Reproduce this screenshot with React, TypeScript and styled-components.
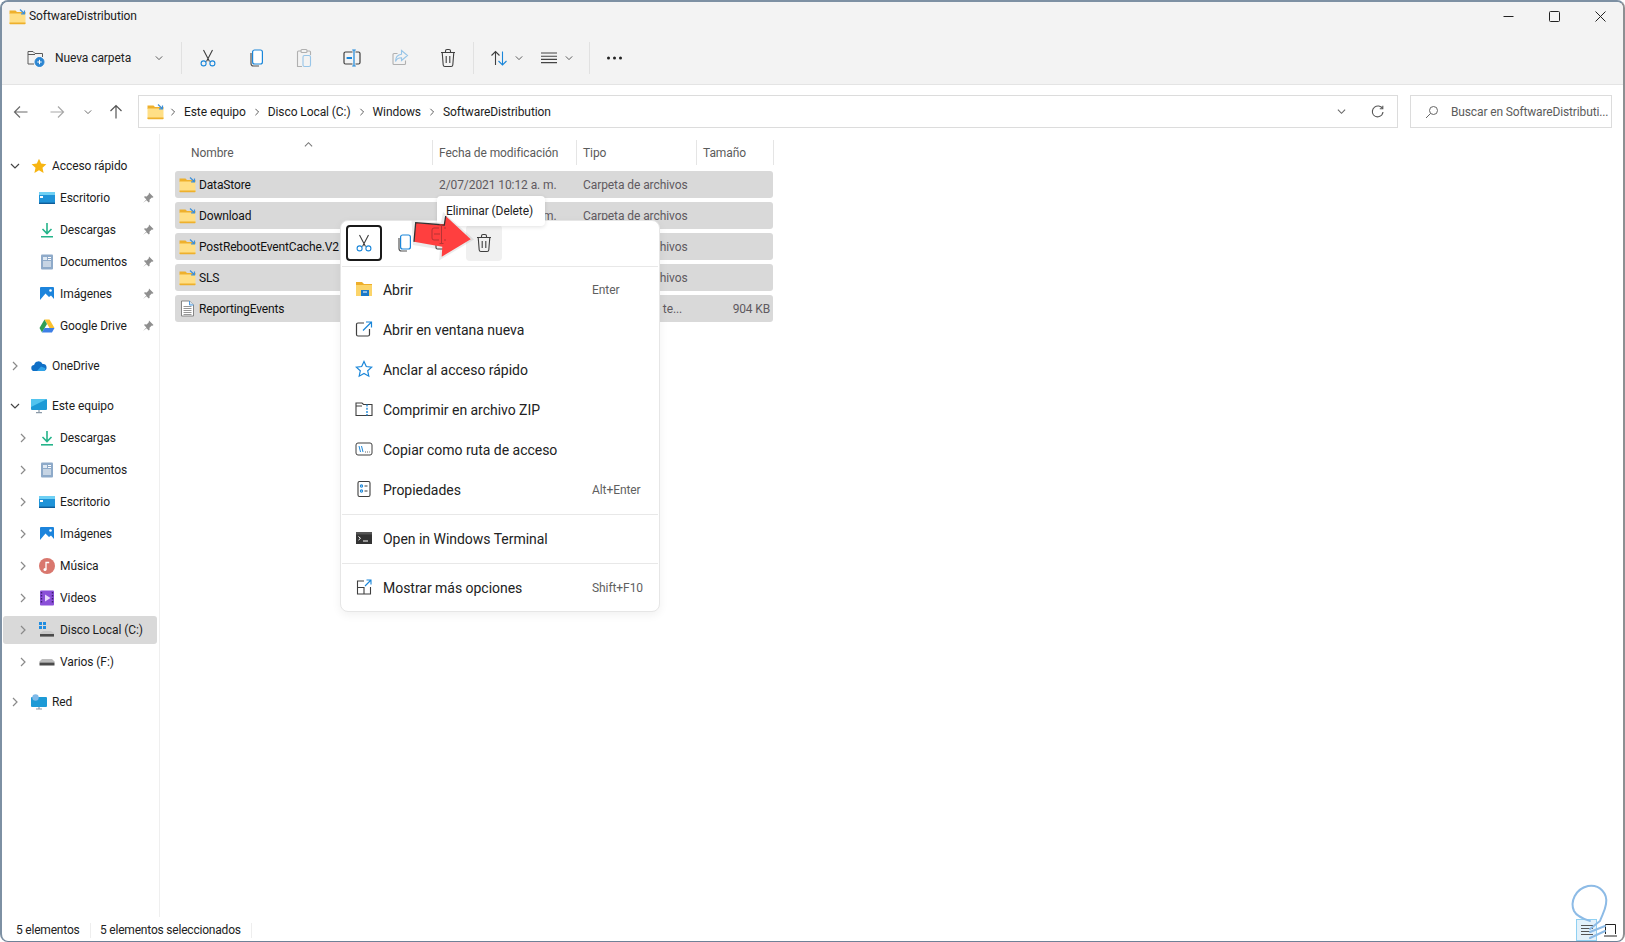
import React from "react";
import styled, { createGlobalStyle } from "styled-components";

const Global = createGlobalStyle`
  html, body { margin: 0; padding: 0; background: #fff; }
  body { font-family: Roboto, "Liberation Sans", sans-serif; font-size: 12px; color: #1b1b1b; letter-spacing: -0.08px; }
  #root { width: 1625px; height: 942px; overflow: hidden; }
  * { box-sizing: border-box; }
`;

const Win = styled.div`
  position: relative; width: 1625px; height: 942px; display: flex; flex-direction: column;
  background: #fff; overflow: hidden;
  border: 2px solid #7d90a3; border-bottom-width: 1px; border-right-color: #8d8f92; border-bottom-color: #6f8197;
  border-radius: 8px;
`;
const TitleBar = styled.div`
  height: 28px; background: #f3f3f3; display: flex; align-items: center; padding-left: 7px; font-size: 12px; flex: none;
`;
const TitleText = styled.span`flex: 1; color: #1c1c1c; margin-left: 3px;`;
const WinBtn = styled.div`width: 46px; height: 28px; display: flex; align-items: center; justify-content: center; flex: none;`;
const Toolbar = styled.div`
  height: 55px; padding-top: 1px; background: #f3f3f3; border-bottom: 1px solid #e4e4e4; display: flex; align-items: center; flex: none;
`;
const NewBtn = styled.div`
  width: 178px; display: flex; align-items: center; padding-left: 25px; gap: 10px; color: #222;
`;
const PushRight = styled.span`margin-left: auto; margin-right: 17px; display: flex;`;
const Sep = styled.div`width: 1px; height: 32px; background: #e1e1e1; margin: 0 2px 0 1px; flex: none;`;
const ToolSlot = styled.div<{ $w?: number; $pl?: number }>`
  width: ${(p) => p.$w ?? 48}px; display: flex; align-items: center; gap: 7px;
  justify-content: ${(p) => (p.$pl !== undefined ? "flex-start" : "center")};
  padding-left: ${(p) => p.$pl ?? 0}px; flex: none;
`;
const AddressRow = styled.div`
  height: 49px; display: flex; align-items: flex-start; padding: 10px 11px 0 1px; flex: none;
`;
const NavSlot = styled.div<{ $w: number }>`width: ${(p) => p.$w}px; height: 33px; display: flex; align-items: center; justify-content: center; flex: none;`;
const AddressBox = styled.div`
  flex: 1; height: 33px; margin-left: 7px; border: 1px solid #dcdcdc; display: flex; align-items: center; padding: 0 9px 0 8px; gap: 7px; color: #1c1c1c;
`;
const CrumbFolder = styled.span`display: flex; margin-right: -2px;`;
const CrumbText = styled.span`white-space: nowrap;`;
const AddressEnd = styled.div`margin-left: auto; display: flex; align-items: center; gap: 25px; padding-right: 3px;`;
const SearchBox = styled.div`
  width: 202px; height: 33px; margin-left: 12px; border: 1px solid #dcdcdc; display: flex; align-items: center; padding-left: 14px; gap: 12px; color: #5c5c5c; flex: none; white-space: nowrap; letter-spacing: -0.14px;
`;
const Main = styled.div`flex: 1; display: flex; min-height: 0;`;
const Sidebar = styled.nav`
  width: 158px; border-right: 1px solid #efefef; padding-top: 16px; flex: none; display: flex; flex-direction: column;
`;
const SideRow = styled.div<{ $level: number; $selected?: boolean; $gap?: boolean }>`
  height: 28px; margin: ${(p) => (p.$gap ? 10 : 2)}px 2px 2px 1px; padding: 0 3px 0 ${(p) => (p.$level ? 14 : 6)}px;
  display: flex; align-items: center; border-radius: 3px; color: #1c1c1c;
  background: ${(p) => (p.$selected ? "#d9d9d9" : "transparent")};
`;
const ChevSlot = styled.span`width: 12px; display: flex; justify-content: center; flex: none;`;
const SideIcon = styled.span`width: 16px; height: 16px; margin: 0 5px 0 10px; display: flex; flex: none;`;
const SideLabel = styled.span`white-space: nowrap; flex: 1;`;
const Content = styled.section`flex: 1; padding: 6px 0 0 15px;`;
const Columns = "258px 144px 120px 77px";
const HeaderRow = styled.div`
  position: relative; display: grid; grid-template-columns: ${Columns}; width: 600px; height: 25px; margin-bottom: 6px; color: #5b5b5b;
`;
const HeaderCell = styled.div<{ $first?: boolean }>`
  padding-left: ${(p) => (p.$first ? 16 : 6)}px; display: flex; align-items: center;
  border-right: 1px solid #e5e5e5;
`;
const SortMark = styled.span`position: absolute; left: 129px; top: 0; display: flex;`;
const FileRow = styled.div`
  display: grid; grid-template-columns: ${Columns}; width: 598px; height: 27px; margin-bottom: 4px; background: #d9d9d9; border-radius: 3px; align-items: center;
`;
const NameCell = styled.div`display: flex; align-items: center; padding-left: 4px; gap: 3px; color: #111; white-space: nowrap; letter-spacing: -0.14px;`;
const DimCell = styled.div`padding-left: 6px; color: #5f5a60; white-space: nowrap;`;
const SizeCell = styled.div`text-align: right; padding-right: 4px; color: #5f5a60; letter-spacing: -0.15px;`;
const StatusBar = styled.div`height: 24px; padding: 2px 0 0 14px; display: flex; align-items: center; flex: none; color: #222; position: relative; letter-spacing: -0.2px;`;
const StatusItem = styled.span<{ $w: number }>`width: ${(p) => p.$w}px; flex: none; height: 15px; line-height: 15px; border-right: 1px solid #eeeeee; white-space: nowrap;`;
const StatusNext = styled.span`padding-left: 9px;`;
const ViewToggles = styled.div`margin-left: auto; display: flex; align-items: center; height: 100%;`;
const DetailsToggle = styled.span`width: 21px; height: 22px; background: #e3f1fa; border: 1px solid #8fd0f2; display: flex; align-items: center; justify-content: center;`;
const TilesToggle = styled.span`width: 26px; display: flex; justify-content: center;`;

const Menu = styled.div`
  position: absolute; left: 338px; top: 218px; width: 320px; height: 392px; background: #fff; border: 1px solid #e6e6e6; border-radius: 8px;
  box-shadow: 0 3px 10px rgba(0,0,0,.06); padding-top: 4px; z-index: 3;
`;
const QuickBar = styled.div`display: flex; gap: 4px; padding: 0 5px; height: 36px;`;
const QuickBtn = styled.div<{ $focus?: boolean; $hover?: boolean }>`
  width: 36px; height: 36px; display: flex; align-items: center; justify-content: center; border-radius: 4px;
  border: ${(p) => (p.$focus ? "2px solid #1a1a1a" : "none")};
  background: ${(p) => (p.$hover ? "#f0f0f0" : "transparent")};
`;
const MenuSep = styled.div<{ $top: number; $bottom: number }>`
  height: 1px; background: #e8e8e8; margin: ${(p) => p.$top}px 1px ${(p) => p.$bottom}px;
`;
const MenuRow = styled.div`height: 40px; display: flex; align-items: center; padding-left: 14px; font-size: 14px; color: #222;`;
const MenuIcon = styled.span`width: 20px; height: 20px; display: flex; flex: none; margin-right: 8px;`;
const MenuLabel = styled.span`white-space: nowrap; letter-spacing: -0.03px;`;
const Shortcut = styled.span`position: absolute; left: 251px; font-size: 12px; color: #5f5f5f;`;
const Tip = styled.div`
  position: absolute; left: 435px; top: 194px; width: 108px; height: 30px; background: #fff; border-radius: 4px; padding-left: 9px;
  display: flex; align-items: center; box-shadow: 0 1px 4px rgba(0,0,0,.12); z-index: 4; color: #222;
`;
const ArrowArt = styled.svg`position: absolute; left: 401px; top: 204px; z-index: 5;`;
const Watermark = styled.svg`position: absolute; left: 1555px; top: 870px; z-index: 6; pointer-events: none;`;

const dark = "#3f3f3f";
const blue = "#1a86d9";

const Chevron = ({ dir = "right", c = "#8a8a8a", s = 10 }: { dir?: "right" | "down" | "up"; c?: string; s?: number }) => (
  <svg width={s} height={s} viewBox="0 0 10 10" fill="none" stroke={c} strokeWidth={1.2}>
    {dir === "right" && <path d="M3 1l4 4-4 4" />}
    {dir === "down" && <path d="M1 3l4 4 4-4" />}
    {dir === "up" && <path d="M1 7l4-4 4 4" />}
  </svg>
);
const Folder = ({ s = 17 }: { s?: number }) => (
  <svg width={s} height={s} viewBox="0 0 17 17">
    <path d="M0.5 2.5h6l1.5 1.5h8.5v2H.5z" fill="#eeb02c" />
    <path d="M.5 5.5h16v10a.6.6 0 01-.6.6H1.1a.6.6 0 01-.6-.6z" fill="#ffdf86" />
    <path d="M.5 14.6h16v1a.6.6 0 01-.6.6H1.1a.6.6 0 01-.6-.6z" fill="#eeb02c" />
    <path d="M11 1.5l4.5 4.2M15.5 2.5v3.4h-3.4" stroke="#3d8fd8" strokeWidth="1.2" fill="none" />
  </svg>
);
const TextFile = () => (
  <svg width="17" height="17" viewBox="0 0 17 17" fill="#fff" stroke="#7b7b7b" strokeWidth=".9">
    <path d="M2.5 1h8l4 4v11h-12z" />
    <path d="M4.5 6.5h8M4.5 8.5h8M4.5 10.5h8M4.5 12.5h8M4.5 14.5h8" strokeWidth=".8" />
    <path d="M10.5 1v4h4" stroke="#3d8fd8" fill="#d5e8f7" />
  </svg>
);
const NewFolderIcon = () => (
  <svg width="18" height="18" viewBox="0 0 18 18" fill="none" stroke="#5a5a5a" strokeWidth="1">
    <path d="M1 15V2.5h5l2 2h7.5V8M1 5.5h7M1 15h6" />
    <circle cx="12.5" cy="13" r="4.5" fill="#2b85d1" stroke="#2b85d1" />
    <path d="M12.5 10.8v4.4M10.3 13h4.4" stroke="#fff" />
  </svg>
);
const Cut = () => (
  <svg width="16" height="18" viewBox="0 0 16 18" fill="none" strokeWidth="1.1">
    <path d="M3.5 1l6 11.5M12.5 1l-6 11.5" stroke={dark} />
    <circle cx="3.6" cy="14.4" r="2.5" stroke={blue} />
    <circle cx="12.4" cy="14.4" r="2.5" stroke={blue} />
  </svg>
);
const Copy = () => (
  <svg width="18" height="20" viewBox="0 0 18 20" fill="none" strokeWidth="1.2">
    <path d="M4 5v10.5a2.5 2.5 0 002.5 2.5H12" stroke="#555" />
    <rect x="5.6" y="2" width="9.8" height="14" rx="2" stroke={blue} fill="#fff" />
  </svg>
);
const Paste = () => (
  <svg width="18" height="20" viewBox="0 0 18 20" fill="none" strokeWidth="1.1" opacity=".42">
    <path d="M6 3H3.5a1 1 0 00-1 1v14.5H7" stroke="#555" />
    <path d="M12 3h2.5a1 1 0 011 1v3" stroke="#555" />
    <rect x="6" y="1.5" width="6" height="3" rx="1" stroke="#555" />
    <rect x="8" y="7.5" width="7.5" height="11" rx="1.5" stroke={blue} />
  </svg>
);
const Rename = () => (
  <svg width="20" height="20" viewBox="0 0 20 20" fill="none" strokeWidth="1.2">
    <path d="M10.5 4H3.5a1.5 1.5 0 00-1.5 1.5v9A1.5 1.5 0 003.5 16h7M13.5 4H16.5A1.5 1.5 0 0118 5.5v9a1.5 1.5 0 01-1.5 1.5h-3" stroke={dark} />
    <path d="M12 2.5v15M10.2 2h3.6M10.2 18h3.6" stroke={blue} />
    <path d="M4.6 10H10" stroke={blue} strokeWidth="2" />
  </svg>
);
const Share = () => (
  <svg width="18" height="18" viewBox="0 0 18 18" fill="none" strokeWidth="1.1" opacity=".42">
    <path d="M14.5 11.5v3a1 1 0 01-1 1H3a1 1 0 01-1-1V5.5a1 1 0 011-1h3.5" stroke="#555" />
    <path d="M10.5 1.5L16.5 6.5l-6 5V8.8c-3 0-5 1-6 3.7 0-4 2-6.8 6-7.3z" stroke={blue} />
  </svg>
);
const Trash = () => (
  <svg width="18" height="20" viewBox="0 0 18 20" fill="none" stroke={dark} strokeWidth="1.1">
    <path d="M2 4.5h14M6.5 4.5V3a1.5 1.5 0 011.5-1.5h2A1.5 1.5 0 0111.5 3v1.5" />
    <path d="M3.2 4.5l1 12.5a1.7 1.7 0 001.7 1.5h6.2a1.7 1.7 0 001.7-1.5l1-12.5" />
    <path d="M7.2 8v7M10.8 8v7" />
  </svg>
);
const Sort = () => (
  <svg width="18" height="18" viewBox="0 0 18 18" fill="none" strokeWidth="1.1">
    <path d="M5.5 16V2.5M1.5 6.5l4-4 4 4" stroke={dark} />
    <path d="M12.5 2.5V16M8.5 12l4 4 4-4" stroke={blue} />
  </svg>
);
const ViewLines = () => (
  <svg width="18" height="14" viewBox="0 0 18 14" stroke="#444" strokeWidth="1.1">
    <path d="M1 2h16M1 5.2h16M1 8.4h16M1 11.6h16" />
  </svg>
);
const Dots = () => (
  <svg width="18" height="6" viewBox="0 0 18 6" fill="#222"><circle cx="1.5" cy="3" r="1.5" /><circle cx="7.5" cy="3" r="1.5" /><circle cx="13.5" cy="3" r="1.5" /></svg>
);
const Arrow = ({ dir, c }: { dir: "left" | "right" | "up"; c: string }) => (
  <svg width="16" height="16" viewBox="0 0 16 16" fill="none" stroke={c} strokeWidth="1.2">
    {dir === "left" && <path d="M14.5 8H1.5M7 2.5L1.5 8 7 13.5" />}
    {dir === "right" && <path d="M1.5 8h13M9 2.5L14.5 8 9 13.5" />}
    {dir === "up" && <path d="M8 14.5V1.5M2.5 7L8 1.5 13.5 7" />}
  </svg>
);
const Minimize = () => <svg width="11" height="11" viewBox="0 0 11 11" stroke="#222"><path d="M.5 5.5h10" /></svg>;
const Maximize = () => <svg width="11" height="11" viewBox="0 0 11 11" fill="none" stroke="#222"><rect x=".5" y=".5" width="10" height="10" rx="1" /></svg>;
const Close = () => <svg width="11" height="11" viewBox="0 0 11 11" stroke="#222"><path d="M.5.5l10 10M10.5.5l-10 10" /></svg>;
const Refresh = () => (
  <svg width="14" height="14" viewBox="0 0 14 14" fill="none" stroke="#555" strokeWidth="1.1">
    <path d="M11.5 3.2A5.5 5.5 0 102.5 10a5.5 5.5 0 009.5-3" /><path d="M11.8.8v3h-3" />
  </svg>
);
const SearchIcon = () => (
  <svg width="14" height="14" viewBox="0 0 14 14" fill="none" stroke="#666" strokeWidth="1">
    <circle cx="8.5" cy="5.5" r="4" /><path d="M5.5 8.5L1 13" />
  </svg>
);
const Pin = () => (
  <svg width="12" height="12" viewBox="0 0 12 12" fill="#8f8f8f"><path d="M7 .5l4.5 4.5-1 .7-.7-.2-2.3 2.3.1 1.9-.8.8-2.3-2.3L1 11l3.4-3.6L2 5.1l.8-.8 1.9.1L7 2.1l-.2-.7z" /></svg>
);
const Star = () => (
  <svg width="16" height="16" viewBox="0 0 16 16" fill="#f7b512"><path d="M8 .8l2.2 4.8 5.2.6-3.9 3.5 1.1 5.2L8 12.3l-4.6 2.6 1.1-5.2L.6 6.2l5.2-.6z" /></svg>
);
const Desktop = () => (
  <svg width="16" height="16" viewBox="0 0 16 16"><rect y="2" width="16" height="12" rx="1" fill="#1f93d8" /><rect y="2" width="16" height="3" fill="#6fd0f4" /><rect x="1" y="6" width="3" height="2" fill="#fff" /><rect y="12.6" width="16" height="1.4" fill="#0f5c99" /></svg>
);
const Download = () => (
  <svg width="16" height="16" viewBox="0 0 16 16" fill="none" stroke="#25b48a" strokeWidth="1.6"><path d="M8 1v10M3.5 7L8 11.5 12.5 7" /><path d="M2 14.8h12" /></svg>
);
const Docs = () => (
  <svg width="16" height="16" viewBox="0 0 16 16"><rect x="2" y="0.5" width="12" height="15" rx="1" fill="#8eaac9" /><path d="M4 3h4v3H4z" fill="#dfe9f3" /><path d="M9 3.5h3M9 5.5h3M4 8h8M4 10h8M4 12h8" stroke="#fff" /></svg>
);
const Pictures = () => (
  <svg width="16" height="16" viewBox="0 0 16 16"><rect x="1" y="1" width="14" height="14" rx="1" fill="#1c84dc" /><path d="M1 14l5.5-6.5L10 11l2-1.5L15 13v2H1z" fill="#fff" /><circle cx="11.5" cy="4.5" r="1.3" fill="#fff" /></svg>
);
const Drive = () => (
  <svg width="16" height="16" viewBox="0 0 16 16"><path d="M5.5 1.5h5L15.5 10h-5z" fill="#fbc02d" /><path d="M5.5 1.5L.5 10 3 14.5 8 6z" fill="#2f9e56" /><path d="M3 14.5h10l2.5-4.5h-10z" fill="#3d7fe6" /></svg>
);
const Cloud = () => (
  <svg width="16" height="16" viewBox="0 0 16 16"><path d="M3.5 13a3 3 0 01-.4-6A4.5 4.5 0 0111.6 6a3.5 3.5 0 01.9 7z" fill="#0f6fc6" /><path d="M6 13l4-4.5 4 1.5a2 2 0 01-1 3z" fill="#30a3e8" /></svg>
);
const Monitor = () => (
  <svg width="16" height="16" viewBox="0 0 16 16"><rect y="1" width="16" height="11" rx="1" fill="#1d9ad6" /><path d="M0 1h16L0 9z" fill="#52c4ee" /><path d="M5 14.7h6M8 12v2.7" stroke="#8b9aa8" strokeWidth="1.2" /></svg>
);
const Music = () => (
  <svg width="16" height="16" viewBox="0 0 16 16"><circle cx="8" cy="8" r="8" fill="#d9776e" /><path d="M7 11.5V4.5h3.2" fill="none" stroke="#fff" strokeWidth="1.3" /><circle cx="6" cy="11.5" r="1.5" fill="#fff" /></svg>
);
const Video = () => (
  <svg width="16" height="16" viewBox="0 0 16 16"><rect x="1" y="0.5" width="14" height="15" rx="1" fill="#8a4fd8" /><path d="M6 4.5v7l5.5-3.5z" fill="#e7d7fb" /><path d="M2.5 2v12M13.5 2v12" stroke="#3d1f70" strokeWidth="1.4" strokeDasharray="1.5 1.5" /></svg>
);
const WinDisk = () => (
  <svg width="16" height="16" viewBox="0 0 16 16"><rect x="0" y="0" width="3" height="3" fill="#1f8ce0" /><rect x="4" y="0" width="3" height="3" fill="#1f8ce0" /><rect x="0" y="4" width="3" height="3" fill="#1f8ce0" /><rect x="4" y="4" width="3" height="3" fill="#1f8ce0" /><path d="M4 9h8l3 2v1H1v-1z" fill="#c9c9c9" /><rect x="1" y="12" width="14" height="2.6" fill="#4b4b4b" /></svg>
);
const Disk = () => (
  <svg width="16" height="16" viewBox="0 0 16 16"><path d="M3 5h10l2.5 2.5v1h-15v-1z" fill="#bcbcbc" /><rect x=".5" y="8.5" width="15" height="3" fill="#4b4b4b" /></svg>
);
const Network = () => (
  <svg width="16" height="16" viewBox="0 0 16 16"><rect y="3" width="16" height="10" rx="1" fill="#1d9ad6" /><circle cx="4.5" cy="3.5" r="3.2" fill="#7fb9e8" /><path d="M5 15h6M8 13v2" stroke="#8b9aa8" strokeWidth="1.2" /></svg>
);
const OpenFolder = () => (
  <svg width="18" height="18" viewBox="0 0 18 18"><path d="M1 2h6l2 2h8v3H1z" fill="#eeae2a" /><path d="M1 5h16v11H1z" fill="#fbd46a" /><rect x="6" y="10" width="8" height="6" fill="#1a78c8" /><path d="M8 12h4" stroke="#fff" /></svg>
);
const NewWindowIcon = () => (
  <svg width="18" height="18" viewBox="0 0 18 18" fill="none" strokeWidth="1.2"><path d="M9 3H3a1.5 1.5 0 00-1.5 1.5v10A1.5 1.5 0 003 16h10a1.5 1.5 0 001.5-1.5V9" stroke={dark} /><path d="M8 10.5L16 2.5M11 2h5.5v5.5" stroke={blue} /></svg>
);
const StarOutline = () => (
  <svg width="18" height="18" viewBox="0 0 18 18" fill="none" stroke={blue} strokeWidth="1.2"><path d="M9 1.5l2.3 5 5.4.6-4 3.7 1.1 5.4L9 13.5l-4.8 2.7 1.1-5.4-4-3.7 5.4-.6z" /></svg>
);
const ZipIcon = () => (
  <svg width="18" height="18" viewBox="0 0 18 18" fill="none" strokeWidth="1.1"><path d="M1 15.5V3h6l1.5 1.5H17v11z M1 6h6" stroke={dark} /><path d="M12 4.5v11" stroke={blue} strokeWidth="1.4" strokeDasharray="2 1.2" /></svg>
);
const PathIcon = () => (
  <svg width="18" height="18" viewBox="0 0 18 18" fill="none" strokeWidth="1"><rect x="1" y="3" width="16" height="12" rx="2" stroke={dark} /><path d="M4 6l1.5 6M6.5 6L8 12" stroke={blue} /><path d="M10 12h.8M12 12h.8M14 12h.6" stroke={dark} /></svg>
);
const PropsIcon = () => (
  <svg width="18" height="18" viewBox="0 0 18 18" fill="none" strokeWidth="1.1"><rect x="3" y="1.5" width="12" height="15" rx="1.5" stroke={dark} /><circle cx="6.5" cy="6" r="1.1" stroke={blue} /><circle cx="6.5" cy="11" r="1.1" stroke={blue} /><path d="M9.5 6h3M9.5 11h3" stroke={dark} /></svg>
);
const TerminalIcon = () => (
  <svg width="18" height="18" viewBox="0 0 18 18"><rect x="1" y="3" width="16" height="12" fill="#333" /><rect x="1" y="3" width="16" height="2.5" fill="#555" /><path d="M3.5 7.5l2 1.8-2 1.8" stroke="#fff" fill="none" /><path d="M8 12h5" stroke="#fff" /></svg>
);
const MoreIcon = () => (
  <svg width="18" height="18" viewBox="0 0 18 18" fill="none" strokeWidth="1.1"><path d="M9 3H2.5v13h13V9M2.5 9.5H9V16" stroke={dark} /><path d="M10 8l6-6M11.5 2H16v4.5" stroke={blue} /></svg>
);

const quick = [
  { label: "Escritorio", icon: <Desktop /> },
  { label: "Descargas", icon: <Download /> },
  { label: "Documentos", icon: <Docs /> },
  { label: "Imágenes", icon: <Pictures /> },
  { label: "Google Drive", icon: <Drive /> },
];
const pc = [
  { label: "Descargas", icon: <Download /> },
  { label: "Documentos", icon: <Docs /> },
  { label: "Escritorio", icon: <Desktop /> },
  { label: "Imágenes", icon: <Pictures /> },
  { label: "Música", icon: <Music /> },
  { label: "Videos", icon: <Video /> },
  { label: "Disco Local (C:)", icon: <WinDisk />, selected: true },
  { label: "Varios (F:)", icon: <Disk /> },
];
const files = [
  { name: "DataStore", date: "2/07/2021 10:12 a. m.", type: "Carpeta de archivos", size: "" },
  { name: "Download", date: "2/07/2021 10:12 a. m.", type: "Carpeta de archivos", size: "" },
  { name: "PostRebootEventCache.V2", date: "2/07/2021 10:12 a. m.", type: "Carpeta de archivos", size: "" },
  { name: "SLS", date: "2/07/2021 10:12 a. m.", type: "Carpeta de archivos", size: "" },
  { name: "ReportingEvents", date: "2/07/2021 10:12 a. m.", type: "Documento de te...", size: "904 KB", text: true },
];
const menuTop = [
  { label: "Abrir", icon: <OpenFolder />, key: "Enter" },
  { label: "Abrir en ventana nueva", icon: <NewWindowIcon /> },
  { label: "Anclar al acceso rápido", icon: <StarOutline /> },
  { label: "Comprimir en archivo ZIP", icon: <ZipIcon /> },
  { label: "Copiar como ruta de acceso", icon: <PathIcon /> },
  { label: "Propiedades", icon: <PropsIcon />, key: "Alt+Enter" },
];

export default function App() {
  return (
    <>
      <Global />
      <Win>
        <TitleBar>
          <Folder />
          <TitleText>SoftwareDistribution</TitleText>
          <WinBtn><Minimize /></WinBtn>
          <WinBtn><Maximize /></WinBtn>
          <WinBtn><Close /></WinBtn>
        </TitleBar>
        <Toolbar>
          <NewBtn>
            <NewFolderIcon />
            <span>Nueva carpeta</span>
            <PushRight><Chevron dir="down" c="#555" s={8} /></PushRight>
          </NewBtn>
          <Sep />
          <ToolSlot><Cut /></ToolSlot>
          <ToolSlot><Copy /></ToolSlot>
          <ToolSlot><Paste /></ToolSlot>
          <ToolSlot><Rename /></ToolSlot>
          <ToolSlot><Share /></ToolSlot>
          <ToolSlot><Trash /></ToolSlot>
          <Sep />
          <ToolSlot $w={58} $pl={14}><Sort /><Chevron dir="down" c="#555" s={8} /></ToolSlot>
          <ToolSlot $w={54} $pl={6}><ViewLines /><Chevron dir="down" c="#555" s={8} /></ToolSlot>
          <Sep />
          <ToolSlot><Dots /></ToolSlot>
        </Toolbar>
        <AddressRow>
          <NavSlot $w={36}><Arrow dir="left" c="#6a6a6a" /></NavSlot>
          <NavSlot $w={36}><Arrow dir="right" c="#a8a8a8" /></NavSlot>
          <NavSlot $w={26}><Chevron dir="down" c="#666" s={8} /></NavSlot>
          <NavSlot $w={30}><Arrow dir="up" c="#555" /></NavSlot>
          <AddressBox>
            <CrumbFolder><Folder /></CrumbFolder>
            <Chevron c="#555" s={8} /><CrumbText>Este equipo</CrumbText>
            <Chevron c="#555" s={8} /><CrumbText>Disco Local (C:)</CrumbText>
            <Chevron c="#555" s={8} /><CrumbText>Windows</CrumbText>
            <Chevron c="#555" s={8} /><CrumbText>SoftwareDistribution</CrumbText>
            <AddressEnd><Chevron dir="down" c="#666" s={9} /><Refresh /></AddressEnd>
          </AddressBox>
          <SearchBox><SearchIcon /><span>Buscar en SoftwareDistributi...</span></SearchBox>
        </AddressRow>
        <Main>
          <Sidebar>
            <SideRow $level={0}>
              <ChevSlot><Chevron dir="down" c="#444" /></ChevSlot>
              <SideIcon><Star /></SideIcon><SideLabel>Acceso rápido</SideLabel>
            </SideRow>
            {quick.map((q) => (
              <SideRow key={q.label} $level={1}>
                <ChevSlot />
                <SideIcon>{q.icon}</SideIcon><SideLabel>{q.label}</SideLabel><Pin />
              </SideRow>
            ))}
            <SideRow $level={0} $gap>
              <ChevSlot><Chevron /></ChevSlot>
              <SideIcon><Cloud /></SideIcon><SideLabel>OneDrive</SideLabel>
            </SideRow>
            <SideRow $level={0} $gap>
              <ChevSlot><Chevron dir="down" c="#444" /></ChevSlot>
              <SideIcon><Monitor /></SideIcon><SideLabel>Este equipo</SideLabel>
            </SideRow>
            {pc.map((q) => (
              <SideRow key={q.label} $level={1} $selected={q.selected}>
                <ChevSlot><Chevron /></ChevSlot>
                <SideIcon>{q.icon}</SideIcon><SideLabel>{q.label}</SideLabel>
              </SideRow>
            ))}
            <SideRow $level={0} $gap>
              <ChevSlot><Chevron /></ChevSlot>
              <SideIcon><Network /></SideIcon><SideLabel>Red</SideLabel>
            </SideRow>
          </Sidebar>
          <Content>
            <HeaderRow>
              <SortMark><Chevron dir="up" c="#777" s={9} /></SortMark>
              <HeaderCell $first>Nombre</HeaderCell>
              <HeaderCell>Fecha de modificación</HeaderCell>
              <HeaderCell>Tipo</HeaderCell>
              <HeaderCell>Tamaño</HeaderCell>
            </HeaderRow>
            {files.map((f) => (
              <FileRow key={f.name}>
                <NameCell>{f.text ? <TextFile /> : <Folder />}{f.name}</NameCell>
                <DimCell>{f.date}</DimCell>
                <DimCell>{f.type}</DimCell>
                <SizeCell>{f.size}</SizeCell>
              </FileRow>
            ))}
          </Content>
        </Main>
        <StatusBar>
          <StatusItem $w={75}>5 elementos</StatusItem>
          <StatusItem $w={161}><StatusNext>5 elementos seleccionados</StatusNext></StatusItem>
          <ViewToggles>
            <DetailsToggle>
              <svg width="14" height="12" viewBox="0 0 14 12" stroke="#555"><path d="M1 1.5h12M1 4.5h12M1 7.5h12M1 10.5h12" /></svg>
            </DetailsToggle>
            <TilesToggle>
              <svg width="13" height="13" viewBox="0 0 13 13" fill="none" stroke="#222"><path d="M1.5 10V.5h10V10M0 12h13" /></svg>
            </TilesToggle>
          </ViewToggles>
        </StatusBar>

        <Menu>
          <QuickBar>
            <QuickBtn $focus><Cut /></QuickBtn>
            <QuickBtn><Copy /></QuickBtn>
            <QuickBtn><Rename /></QuickBtn>
            <QuickBtn $hover><Trash /></QuickBtn>
          </QuickBar>
          <MenuSep $top={5} $bottom={3} />
          {menuTop.map((m) => (
            <MenuRow key={m.label}>
              <MenuIcon>{m.icon}</MenuIcon>
              <MenuLabel>{m.label}</MenuLabel>
              {m.key && <Shortcut>{m.key}</Shortcut>}
            </MenuRow>
          ))}
          <MenuSep $top={4} $bottom={4} />
          <MenuRow>
            <MenuIcon><TerminalIcon /></MenuIcon>
            <MenuLabel>Open in Windows Terminal</MenuLabel>
          </MenuRow>
          <MenuSep $top={4} $bottom={4} />
          <MenuRow>
            <MenuIcon><MoreIcon /></MenuIcon>
            <MenuLabel>Mostrar más opciones</MenuLabel>
            <Shortcut>Shift+F10</Shortcut>
          </MenuRow>
        </Menu>
        <Tip>Eliminar (Delete)</Tip>
        <ArrowArt width="75" height="62" viewBox="0 0 75 62">
          <path d="M10 39L8.5 14.5 38 16.5 40 6 71 33.5 36 54.5 37 43.5z" fill="#808080" fillOpacity=".16" />
          <path d="M12.7 16.7L41.3 19 42.7 10 67.7 33.3 38.7 50.7 39.3 40.7 11 35.7z" fill="#ff3f3f" />
          <path d="M11 35.7L12.7 16.7 41.3 19 42.7 10" fill="none" stroke="#333" strokeWidth="1.3" />
          <path d="M36 22h-5a2 2 0 00-2 2v8a2 2 0 002 2h5M41 22h2M41 34h2M38.5 19v18M36.5 18.5h4M36.5 37.5h4M31 28h6" fill="none" stroke="#b53434" strokeWidth="1" />
        </ArrowArt>
        <Watermark width="65" height="70" viewBox="0 0 65 70" fill="none" stroke="#8dbbe6" strokeWidth="2" strokeLinecap="round">
          <path d="M33 49c-6-2-13-4-16-10-4-9 1-22 14-25 12-2 20 8 18 18-1 7-4 11-6 17l-10 8" />
          <path d="M33 60l15-6M33 66l15-7" />
        </Watermark>
      </Win>
    </>
  );
}
